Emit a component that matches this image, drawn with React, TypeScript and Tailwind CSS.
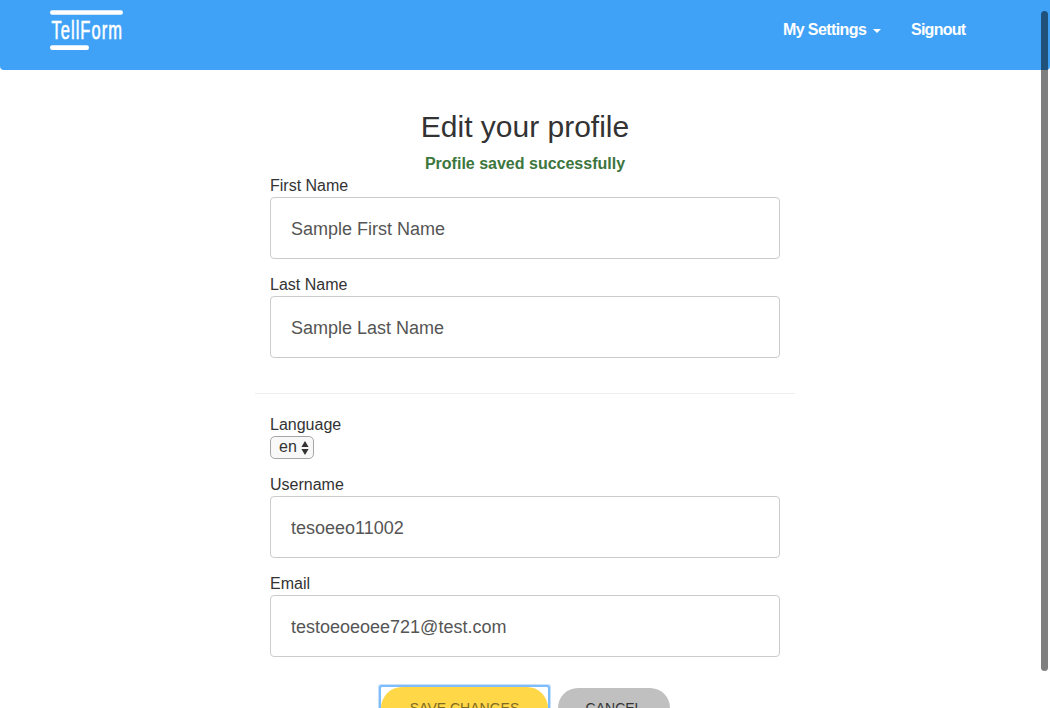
import React from "react";

function Logo() {
  return (
    <svg width="90" height="42" viewBox="0 0 90 42" aria-label="TellForm" className="block">
      <rect x="0" y="0.2" width="73" height="4.5" rx="2.2" fill="#fff" />
      <text
        transform="translate(1.4 29.2) scale(0.66 1)"
        fontSize="25"
        letterSpacing="1.6"
        fill="#fff"
        stroke="#fff"
        strokeWidth="0.6"
        fontFamily="'Liberation Sans', sans-serif"
      >
        TellForm
      </text>
      <rect x="0" y="35.3" width="39" height="4.7" rx="2.2" fill="#fff" />
    </svg>
  );
}

function Field({ label, value, id }: { label: string; value: string; id: string }) {
  return (
    <div className="flex flex-col px-[15px]">
      <label htmlFor={id} className="h-[23px] text-base leading-[23px]">
        {label}
      </label>
      <input
        id={id}
        defaultValue={value}
        className="h-[62px] w-full rounded-[4px] border border-[#ccc] bg-white px-5 pt-0.5 text-[18px] text-[#555] outline-none"
      />
    </div>
  );
}

export default function App() {
  return (
    <div className="relative h-[708px] w-full overflow-hidden bg-white font-['Liberation_Sans',Arial,sans-serif] text-[#333]">
      <header className="flex h-[70px] items-start justify-between rounded-b-[4px] bg-[#3fa2f7] pr-[84px] pl-[50px]">
        <a className="pt-[10px]">
          <Logo />
        </a>
        <nav className="flex pt-[18px] text-base leading-6 font-bold text-white">
          <a className="flex w-[128px] items-center">
            <span className="tracking-[-0.6px]">My Settings</span>
            <span className="mt-[2px] ml-[7px] h-0 w-0 border-x-4 border-t-4 border-x-transparent border-t-white" />
          </a>
          <a className="w-[55px] tracking-[-0.75px] whitespace-nowrap">Signout</a>
        </nav>
      </header>

      <main className="mx-auto flex w-[540px] flex-col pt-[40px]">
        <h3 className="text-center text-[30px] leading-[33px]">Edit your profile</h3>
        <strong className="mt-[9px] block h-[22px] text-center text-base leading-[23px] font-bold text-[#3c763d]">
          Profile saved successfully
        </strong>
        <div className="flex flex-col gap-[14px]">
          <Field id="firstName" label="First Name" value="Sample First Name" />
          <Field id="lastName" label="Last Name" value="Sample Last Name" />
        </div>
        <hr className="mt-[35px] border-[#eee]" />
        <div className="mt-[19px] flex flex-col px-[15px]">
          <span className="h-[23px] text-base leading-[23px]">Language</span>
          <button className="flex h-[23px] w-[44px] items-center rounded-[5px] border border-[#a6a6a6] bg-[#f8f8f8] pl-2 text-base leading-5">
            <span className="-mt-0.5">en</span>
            <svg width="8" height="14" viewBox="0 0 8 14" className="ml-[4px]" fill="#333">
              <path d="M4 0L7.6 6H.4zM4 14L.4 8h7.2z" />
            </svg>
          </button>
        </div>
        <div className="mt-[14px] flex flex-col gap-[14px]">
          <Field id="username" label="Username" value="tesoeeo11002" />
          <Field id="email" label="Email" value="testoeoeoee721@test.com" />
        </div>
        <div className="mt-[30px] flex pl-[126px] text-[14px]">
          <div className="h-[42px] w-[167px] rounded-[1px] shadow-[0_0_0_2px_#7ebcfb,0_0_0_3px_#c6e1fd]">
            <button className="h-[42px] w-[167px] rounded-[21px] bg-[#ffd747] text-[#806b24]">SAVE CHANGES</button>
          </div>
          <button className="mt-px ml-[10px] h-[40px] w-[112px] rounded-[20px] bg-[#c0c0c0] text-[#333]">CANCEL</button>
        </div>
      </main>

      <div className="absolute top-[11px] right-[2px] h-[660px] w-[7px] rounded-full bg-black/50" />
    </div>
  );
}
